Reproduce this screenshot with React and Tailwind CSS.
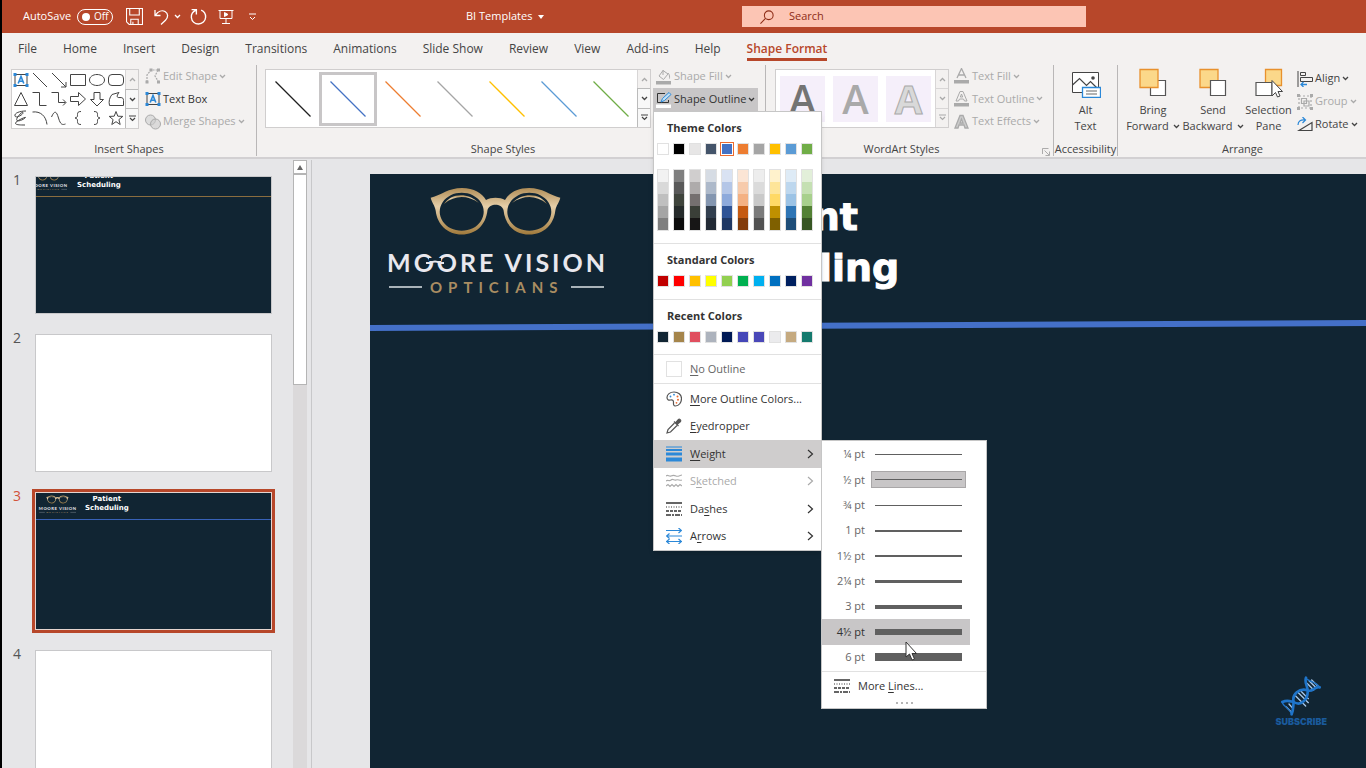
import React from 'react';
import clsx from 'clsx';

const tabs = ['File', 'Home', 'Insert', 'Design', 'Transitions', 'Animations', 'Slide Show', 'Review', 'View', 'Add-ins', 'Help', 'Shape Format'];

const themeColors = ['#ffffff', '#000000', '#e7e6e6', '#44546a', '#4472c4', '#ed7d31', '#a5a5a5', '#ffc000', '#5b9bd5', '#70ad47'];
const standardColors = ['#c00000', '#ff0000', '#ffc000', '#ffff00', '#92d050', '#00b050', '#00b0f0', '#0070c0', '#002060', '#7030a0'];
const recentColors = ['#112533', '#a5854b', '#e04f5f', '#adb3bd', '#001a55', '#4547b8', '#4a48b8', '#ebebed', '#c5aa80', '#157a6e'];

// Five tints and shades under every theme colour
const shades = [
  ['#f2f2f2', '#d9d9d9', '#bfbfbf', '#a5a5a5', '#7f7f7f'],
  ['#7f7f7f', '#595959', '#3f443c', '#262b2b', '#0c0c0c'],
  ['#d0cece', '#aeabab', '#757070', '#3a3f38', '#171616'],
  ['#d6dce4', '#adb9ca', '#8496b0', '#323f4f', '#222a35'],
  ['#d9e2f3', '#b4c6e7', '#8eaadb', '#2f5496', '#1f3864'],
  ['#fbe5d5', '#f7cbac', '#f4b183', '#c55a11', '#833c0b'],
  ['#ededed', '#dbdbdb', '#c9c9c9', '#7b7b7b', '#525252'],
  ['#fff2cc', '#fee599', '#ffd965', '#bf9000', '#7f6000'],
  ['#deebf6', '#bdd7ee', '#9cc3e5', '#2e75b5', '#1e4e79'],
  ['#e2efd9', '#c5e0b3', '#a8d08d', '#538135', '#375623'],
];

const styleLines = ['#1f1f1f', '#4472c4', '#ed7d31', '#a5a5a5', '#ffc000', '#5b9bd5', '#70ad47'];

const weights = [
  { label: '¼ pt', bar: 'h-px' },
  { label: '½ pt', bar: 'h-px', selected: true },
  { label: '¾ pt', bar: 'h-px' },
  { label: '1 pt', bar: 'h-[2px]' },
  { label: '1½ pt', bar: 'h-[2px]' },
  { label: '2¼ pt', bar: 'h-[3px]' },
  { label: '3 pt', bar: 'h-[4px]' },
  { label: '4½ pt', bar: 'h-[6px]', hover: true },
  { label: '6 pt', bar: 'h-[8px]' },
];

const Svg = ({ size = 16, className, children, ...rest }) => (
  <svg
    width={size}
    height={size}
    viewBox="0 0 16 16"
    fill="none"
    stroke="currentColor"
    className={clsx('shrink-0', className)}
    aria-hidden="true"
    {...rest}
  >
    {children}
  </svg>
);

const Chevron = ({ className }) => (
  <svg width="7" height="5" viewBox="0 0 7 5" fill="none" stroke="currentColor" strokeWidth="1.3" className={clsx('shrink-0', className)} aria-hidden="true">
    <path d="M1 1l2.5 2.5L6 1" />
  </svg>
);

const TextBoxIcon = () => (
  <Svg className="text-[#444]">
    <path d="M2 2.5h12v11H2z" />
    <path d="M0.5 1h3v3h-3zM12.5 1h3v3h-3zM0.5 12h3v3h-3zM12.5 12h3v3h-3z" fill="#2b88d8" stroke="none" />
    <path d="M5.2 11.5L8 4.5l2.8 7M6.2 9.2h3.6" stroke="#2b88d8" strokeWidth="1.6" />
  </Svg>
);

// ---- Title bar ----

const TitleBar = () => (
  <header className="flex h-[33px] shrink-0 items-center bg-[#b7472a] text-[12px] text-white">
    <div className="flex w-[464px] shrink-0 items-center pl-[21px]">
      <label htmlFor="autosave" className="w-[54px] text-[11px]">AutoSave</label>
      <span className="flex h-4 w-9 items-center gap-1 rounded-full border border-white pl-1 text-[10px]">
        <input id="autosave" type="checkbox" role="switch" className="h-2 w-2 shrink-0 appearance-none rounded-full bg-white" />
        Off
      </span>
      <button aria-label="Save" className="ml-[13px]">
        <Svg size={17} strokeWidth="1">
          <path d="M0.5 0.5h15v15H3l-2.500-2.500zM3.500 0.500v6h9v-6M4.500 15.500v-5h7v5M6.500 15v-2" />
        </Svg>
      </button>
      <button aria-label="Undo" className="ml-[11px]">
        <Svg size={16} strokeWidth="1.300">
          <path d="M1 1v5.500h5.500M1.300 6.300C4 2.500 8 0.800 11 2.500c3.500 2 3.300 6 .5 8.700L7 15.500" />
        </Svg>
      </button>
      <button aria-label="Undo list" className="ml-1"><Chevron /></button>
      <button aria-label="Redo" className="ml-[9px]">
        <Svg size={17} strokeWidth="1.300">
          <path d="M1.500 1.500h4.500v4.500M5.800 2C2.500 3.300 1 6 1.300 9c.4 3.500 3.200 6 6.700 6s6.500-2.800 6.700-6.300c.1-3-1.500-5.600-4.200-6.700" />
        </Svg>
      </button>
      <button aria-label="Start from beginning" className="ml-[11px]">
        <Svg size={16} strokeWidth="1">
          <path d="M0.500 1.500h15M2 1.500v8h12v-8M8 9.500v5M4 14.500h8" />
          <path d="M6.500 3.500v4l3.500-2z" fill="currentColor" />
        </Svg>
      </button>
      <button aria-label="Customize toolbar" className="ml-[14px]">
        <svg width="9" height="8" viewBox="0 0 9 8" fill="none" stroke="currentColor" aria-hidden="true">
          <path d="M1 1h7M2 4l2.500 2.500L7 4" />
        </svg>
      </button>
    </div>
    <div className="flex w-[276px] shrink-0 items-center gap-[6px] text-[11px]">
      BI Templates
      <svg width="6" height="4" viewBox="0 0 6 4" fill="currentColor" aria-hidden="true"><path d="M0 0h6L3 4z" /></svg>
    </div>
    <div className="flex h-[21px] w-full max-w-[344px] items-center gap-[15px] bg-[#fcc5b4] pl-[18px] text-[#8e2c16]">
      <Svg size={14} strokeWidth="1.200">
        <circle cx="10" cy="6" r="5" />
        <path d="M6.300 9.700L0.500 15.500" />
      </Svg>
      <input type="text" placeholder="Search" aria-label="Search" className="w-full bg-transparent text-[11px] outline-none placeholder:text-[#8e2c16]" />
    </div>
  </header>
);

const TabRow = () => (
  <nav className="flex h-8 shrink-0 items-center gap-[26px] pl-4 text-[12px] text-[#444]">
    {tabs.map((tab) => (
      <button
        key={tab}
        className={clsx(
          'h-6 shrink-0 border-b-[3px] pt-[3px] leading-4 whitespace-nowrap',
          tab === 'Shape Format' ? 'border-[#b7472a] font-semibold text-[#b7472a]' : 'border-transparent'
        )}
      >
        {tab}
      </button>
    ))}
  </nav>
);

// ---- Ribbon ----

const Group = ({ label, className, children, launcher }) => (
  <section className={clsx('relative flex h-[91px] shrink-0 flex-col border-r border-[#b9b7b7]', className)}>
    <div className="flex h-[76px] shrink-0 items-start">{children}</div>
    <h2 className={clsx('text-center text-[11px] leading-4 whitespace-nowrap text-[#444]', launcher && 'pr-4')}>{label}</h2>
    {launcher && (
      <button aria-label={label + ' options'} className="absolute right-[3px] bottom-0 text-[#999]">
        <Svg size={8} strokeWidth="1.600"><path d="M1 12V1h12M5 5l9 9M15 7v8H7" /></Svg>
      </button>
    )}
  </section>
);

const GalleryScroll = ({ muted }) => (
  <div className="flex w-[13px] shrink-0 flex-col text-[#444]">
    <button aria-label="Scroll up" className="grid flex-1 place-items-center border-l border-[#d8d6d6] bg-[#f3f1f0] text-[#aaa]">
      <Chevron className="rotate-180" />
    </button>
    <button aria-label="Scroll down" className={clsx('grid flex-1 place-items-center border border-r-0', muted ? 'border-[#d8d6d6] bg-[#f3f1f0] text-[#aaa]' : 'border-[#bbb] bg-[#f8f8f8]')}>
      <Chevron />
    </button>
    <button aria-label="More" className={clsx('grid flex-1 place-items-center border-l', muted ? 'border-[#d8d6d6] bg-[#f3f1f0] text-[#aaa]' : 'border-[#bbb] bg-[#f8f8f8]')}>
      <svg width="7" height="7" viewBox="0 0 7 7" fill="none" stroke="currentColor" strokeWidth="1.200" aria-hidden="true">
        <path d="M0 1h7M1 3l2.500 2.500L6 3" />
      </svg>
    </button>
  </div>
);

const shapePaths = [
  'M1 1l14 14',
  'M1 1l14 14M15 10v5h-5',
  'M0.500 2.500h15v11h-15z',
  'M8 2.500c4.200 0 7.500 2.400 7.500 5.500s-3.300 5.500-7.500 5.500S0.500 11.100 0.500 8 3.800 2.500 8 2.500z',
  'M4 2.500h8q3.500 0 3.500 3.500v4q0 3.500-3.500 3.500H4Q0.500 13.500 0.500 10V6Q0.500 2.500 4 2.500z',
  'M8 1.500l6.500 13h-13z',
  'M0.500 1.500h7v13h7',
  'M0.500 1.500h7v10h7M12 8.500l3 3-3 3',
  'M0.500 5.500h8v-4l7 6.500-7 6.500v-4h-8z',
  'M5 1.500h6v7h3.500L8 15 1.500 8.500H5z',
  'M4 3.500L11 1.500c-3 4-2 5.500 1 5 3 0 3.500 1 3.500 3v5H1.500c-1-4 0-8 2.500-11z',
  'M13 1C7 1 1 3 2 6s9-2 8-3.500S2 9 4 10.500s8-2 8.500-3S3 11 2.500 13s5 2 9.500 2',
  'M0.500 2c8-1 13.500 4 14.500 12.500',
  'M0.500 7c3-7 5-6 7 1s4 7 7 6',
  'M11 1.500c-3 0-3.500 1-3.500 3s0 3-2.500 3.500c2.500.5 2.500 1.500 2.500 3.500s.5 3 3.500 3',
  'M5 1.500c3 0 3.500 1 3.500 3s0 3 2.500 3.500c-2.500.5-2.500 1.500-2.500 3.500s-.5 3-3.500 3',
  'M8 1.500l1.800 4.700 5 .2-3.900 3.200 1.300 4.900L8 11.700l-4.200 2.800 1.300-4.900L1.200 6.400l5-.2z',
];

const InsertShapes = () => (
  <Group label="Insert Shapes" className="w-[255px]">
    <div className="mt-1 ml-[9px] flex h-[60px] w-[128px] border border-[#d0cece] bg-white text-[#444]">
      <div className="grid flex-1 grid-cols-6 place-items-center">
        <TextBoxIcon />
        {shapePaths.map((d) => (
          <Svg key={d}><path d={d} /></Svg>
        ))}
      </div>
      <GalleryScroll />
    </div>
    <div className="ml-[6px] grid h-[68px] grid-rows-3 text-[11px] whitespace-nowrap text-[#aaa]">
      <button className="flex items-center gap-[2px]">
        <Svg strokeWidth="1.200">
          <path d="M2 14V7l4-5h7M13 2l-3 6 3 5" strokeDasharray="2 1" />
          <path d="M0.500 12.500h3v3h-3zM4.500 0.500h3v3h-3zM12 0.500h3v3h-3zM12 12.500h3v3h-3z" fill="currentColor" stroke="none" />
        </Svg>
        Edit Shape <Chevron />
      </button>
      <button className="flex items-center gap-[2px] text-[#333]"><TextBoxIcon /> Text Box</button>
      <button className="flex items-center gap-[2px]">
        <Svg>
          <circle cx="5.500" cy="6" r="5" fill="#ddd" />
          <circle cx="10.500" cy="10" r="5" fill="#ccc" fillOpacity="0.600" />
        </Svg>
        Merge Shapes <Chevron />
      </button>
    </div>
  </Group>
);

const Swatches = ({ colors, selected }) => (
  <div className="flex gap-1 pl-[3px]">
    {colors.map((c, i) => (
      <button
        key={c}
        aria-label={c}
        style={{ backgroundColor: c }}
        className={clsx('h-3 w-3 border', i === selected ? 'border-[#fff] outline outline-[#ed6b2f]' : 'border-[#e1e1e1]')}
      />
    ))}
  </div>
);

const MenuTitle = ({ children }) => (
  <h3 className="h-[31px] pl-[13px] text-[11px] leading-[31px] font-bold text-[#333]">{children}</h3>
);

// Splits the label round its access key, which is underlined
const MenuLabel = ({ text, keyAt = 0 }) => (
  <span>
    {text.slice(0, keyAt)}
    <u className="underline-offset-2">{text[keyAt]}</u>
    {text.slice(keyAt + 1)}
  </span>
);

const MenuItem = ({ icon, text, keyAt, arrow, color = 'text-[#333]', active }) => (
  <button
    className={clsx(
      'flex h-full w-full items-center gap-2 pl-3 text-[11px] whitespace-nowrap',
      active && 'bg-[#cfcdcd]',
      color
    )}
  >
    {icon}
    <MenuLabel text={text} keyAt={keyAt} />
    {arrow && (
      <svg width="7" height="10" viewBox="0 0 7 10" fill="none" stroke="currentColor" strokeWidth="1.200" className="mr-[7px] ml-auto" aria-hidden="true">
        <path d="M1 1l4.500 4L1 9" />
      </svg>
    )}
  </button>
);

const DashesIcon = () => (
  <Svg>
    <path d="M0 2h16" strokeWidth="1.500" />
    <path d="M0 6h16" strokeDasharray="1 1.500" />
    <path d="M0 10h16" strokeWidth="1.500" strokeDasharray="3 1" />
    <path d="M0 14h16" strokeWidth="1.500" strokeDasharray="5 1 2 1" />
  </Svg>
);

const WeightMenu = () => (
  <div className="absolute top-0 left-full w-[166px] border border-[#c6c6c6] bg-white pt-px text-[11px]">
    <div className="grid h-[228px] grid-rows-9">
      {weights.map((w) => (
        <button
          key={w.label}
          className={clsx('mr-4 flex items-center gap-[6px]', w.hover ? 'bg-[#c8c6c7] text-[#333]' : 'text-[#666]')}
        >
          <span className="w-[43px] text-right">{w.label}</span>
          <span className={clsx('flex h-[17px] w-[95px] items-center border px-[3px]', w.selected ? 'border-[#a9a7a8] bg-[#c8c6c7]' : 'border-transparent')}>
            <span className={clsx('w-full bg-[#606060]', w.bar)} />
          </span>
        </button>
      ))}
    </div>
    <div className="mt-px border-t border-[#e1e1e1]">
      <div className="h-7"><MenuItem icon={<DashesIcon />} text="More Lines..." keyAt={5} /></div>
      <div className="flex h-2 justify-center gap-[3px] pt-[2px]">
        <i className="h-[2px] w-[2px] bg-[#b5b5b5]" />
        <i className="h-[2px] w-[2px] bg-[#b5b5b5]" />
        <i className="h-[2px] w-[2px] bg-[#b5b5b5]" />
        <i className="h-[2px] w-[2px] bg-[#b5b5b5]" />
      </div>
    </div>
    {/* Mouse pointer */}
    <svg width="13" height="20" viewBox="0 0 13 20" className="absolute top-[200px] left-[83px]" aria-hidden="true">
      <path d="M1 1v15l3.500-3 2.500 6 2.500-1-2.500-5.500h4.500z" fill="#fff" stroke="#333" />
    </svg>
  </div>
);

const OutlineMenu = () => (
  <div className="absolute top-full left-0 z-10 w-[169px] border border-[#c6c6c6] bg-white shadow-md">
    <MenuTitle>Theme Colors</MenuTitle>
    <Swatches colors={themeColors} selected={4} />
    <div className="mt-[14px] flex gap-1 pl-[3px]">
      {shades.map((column, i) => (
        <div key={i} className="grid h-[62px] w-3 grid-rows-5 border border-[#e1e1e1]">
          {column.map((c) => (
            <button key={c} aria-label={c} style={{ backgroundColor: c }} />
          ))}
        </div>
      ))}
    </div>
    <div className="mt-3 border-t border-[#e1e1e1]">
      <MenuTitle>Standard Colors</MenuTitle>
      <Swatches colors={standardColors} />
    </div>
    <div className="mt-3 border-t border-[#e1e1e1]">
      <MenuTitle>Recent Colors</MenuTitle>
      <Swatches colors={recentColors} />
    </div>
    <div className="mt-[11px] h-[30px] border-y border-[#e1e1e1]">
      <MenuItem color="text-[#666]" icon={<span className="h-4 w-4 border border-[#e1e1e1]" />} text="No Outline" />
    </div>
    <div className="mt-px grid h-[165px] grid-rows-6">
      <MenuItem
        icon={
          <Svg className="text-[#555]" strokeWidth="1.200">
            <path d="M8 1C4 1 1 3.500 1 6.500c0 2 1.500 3 3.500 2.500s3 .5 3 2-.5 4 2 4c3.500 0 6-3.500 6-7.500S12 1 8 1z" />
            <circle cx="4.500" cy="5.500" r="0.900" fill="#2b88d8" stroke="none" />
            <circle cx="8" cy="3.700" r="0.900" fill="#2b88d8" stroke="none" />
            <circle cx="11.500" cy="5.500" r="1" fill="#ed6b2f" stroke="none" />
            <circle cx="12" cy="8.800" r="1" fill="#ed6b2f" stroke="none" />
            <circle cx="10.500" cy="11.800" r="0.900" fill="#ed6b2f" stroke="none" />
          </Svg>
        }
        text="More Outline Colors..."
      />
      <MenuItem
        icon={
          <Svg className="text-[#555]" strokeWidth="1.200">
            <path d="M8.500 5l-6.500 6.500-1 3.500 3.500-1 6.500-6.500" />
            <path d="M8 3.500l4.500 4.500M9.500 5l3-3.500c1-1 2.800.8 2 2L11 6.500z" fill="currentColor" />
          </Svg>
        }
        text="Eyedropper"
      />
      <div className="relative">
        <MenuItem
          active
          arrow
          icon={
            <Svg className="text-[#2b88d8]">
              <path d="M0 1h16" />
              <path d="M0 4h16" strokeWidth="2" />
              <path d="M0 8h16" strokeWidth="3" />
              <path d="M0 13.500h16" strokeWidth="4" />
            </Svg>
          }
          text="Weight"
        />
        <WeightMenu />
      </div>
      <MenuItem
        color="text-[#aaa]"
        arrow
        icon={
          <Svg strokeWidth="1.100">
            <path d="M0 3c2-2 3 1 5 0s3-1 5 0 4-1 6-1M0 8c2-2 3 1 5-1s3 1 5 0 4 1 6 0M0 13l2-1.500 2 2 2-2 2 2 2-2 2 2 2-2 2 1.500" />
          </Svg>
        }
        text="Sketched"
        keyAt={1}
      />
      <MenuItem arrow icon={<DashesIcon />} text="Dashes" keyAt={2} />
      <MenuItem
        arrow
        icon={
          <Svg className="text-[#2b88d8]" strokeWidth="1.200">
            <path d="M0 2.500h15M12.500 0l3 2.500-3 2.500M1 8h15M3.500 5.500L0.500 8l3 2.500M0 13.500h16M3.500 11l-3 2.500 3 2.500M12.500 11l3 2.500-3 2.500" />
          </Svg>
        }
        text="Arrows"
        keyAt={1}
      />
    </div>
  </div>
);

const ShapeStyles = () => (
  <Group label="Shape Styles" launcher className="w-[509px]">
    <div className="mt-1 ml-2 flex h-[59px] w-[386px] border border-[#d0cece] bg-white">
      <div className="flex flex-1 items-center pl-px">
        {styleLines.map((c, i) => (
          <button
            key={c}
            aria-label={'Line style ' + (i + 1)}
            className={clsx('grid h-[54px] flex-1 place-items-center', i === 1 && 'border-[3px] border-[#c8c6c7]')}
          >
            <svg width="36" height="36" viewBox="0 0 36 36" aria-hidden="true">
              <path d="M0.500 0.500l35 35" stroke={c} strokeWidth="1.300" />
            </svg>
          </button>
        ))}
      </div>
      <GalleryScroll />
    </div>
    <div className="ml-[2px] flex flex-col text-[11px] whitespace-nowrap">
      <button className="flex h-[23px] items-center gap-[2px] px-[3px] text-[#aaa]">
        <Svg>
          <path d="M7 1.500L3 7l4.500 3.500L12 5zM7 1v5M12 4c2 2 1.500 4 1.500 5.500" />
          <path d="M0 12h15v3.500H0z" fill="currentColor" stroke="none" />
        </Svg>
        Shape Fill <Chevron />
      </button>
      <div className="relative">
        <button className="flex h-[23px] w-[105px] items-center gap-[2px] bg-[#c8c6c7] px-[3px] text-[#333]" aria-expanded="true">
          <Svg>
            <path d="M9 1.500H1.500v9h11V8" />
            <path d="M5 10l1.500-3.500L13 0.500l2 2-6.500 6z" fill="#bfe0f7" stroke="#2b88d8" />
            <path d="M0 12.500h15V16H0z" fill="#fff" stroke="none" />
          </Svg>
          Shape Outline <Chevron />
        </button>
        <OutlineMenu />
      </div>
    </div>
  </Group>
);

const WordArtStyles = () => (
  <Group label="WordArt Styles" launcher className="w-[288px]">
    <div className="mt-1 ml-[9px] flex h-[59px] w-[174px] border border-[#d0cece] bg-white">
      <div className="flex flex-1 items-center gap-2 pl-1 text-[40px] leading-[46px] font-semibold">
        <button className="h-[46px] w-[45px] bg-[#f5effa] text-[#747474]">A</button>
        <button className="h-[46px] w-[45px] bg-[#f5effa] text-[#a9a9a9]">A</button>
        <button className="h-[46px] w-[45px] bg-[#f5effa] font-bold text-[#d9d9d9] [-webkit-text-stroke:1px_#aaa]">A</button>
      </div>
      <GalleryScroll muted />
    </div>
    <div className="ml-[5px] grid h-[68px] grid-rows-3 text-[11px] whitespace-nowrap text-[#aaa]">
      <button className="flex items-center gap-[2px]">
        <Svg>
          <path d="M3 10L7.500 0.500 12 10M4.500 7h6" strokeWidth="1.300" />
          <path d="M0 12h15v3.500H0z" fill="currentColor" stroke="none" />
        </Svg>
        Text Fill <Chevron />
      </button>
      <button className="flex items-center gap-[2px]">
        <Svg>
          <path d="M2 10L6 0.500h3L13 10h-2.500L9.500 8h-4l-1 2zM7.500 3L6.300 6h2.400z" />
          <path d="M0 12h15v3.500H0z" fill="currentColor" stroke="none" />
        </Svg>
        Text Outline <Chevron />
      </button>
      <button className="flex items-center gap-[2px]">
        <Svg strokeWidth="1.300">
          <path d="M1 14L6 1.500h3L14 14h-3l-1-3H5l-1 3zM7.500 5L6 9h3z" fill="#ccc" />
        </Svg>
        Text Effects <Chevron />
      </button>
    </div>
  </Group>
);

const BigButton = ({ icon, lines, arrow, className }) => (
  <button className={clsx('flex flex-col items-center text-[11px] leading-4 text-[#444]', className)}>
    <svg width="30" height="30" viewBox="0 0 30 30" fill="none" className="mb-1" aria-hidden="true">{icon}</svg>
    <span>{lines[0]}</span>
    <span className="flex items-center gap-1 whitespace-nowrap">{lines[1]}{arrow && <Chevron />}</span>
  </button>
);

const AltText = () => (
  <Group label="Accessibility" className="w-16">
    <BigButton
      className="mx-auto mt-[3px]"
      lines={['Alt', 'Text']}
      icon={
        <>
          <path d="M1.500 4.500h26v20h-26z" fill="#fff" stroke="#444" />
          <path d="M1.500 17l7-6.500 7 7 4-4 6 6" stroke="#444" strokeWidth="1.200" />
          <circle cx="22" cy="10" r="1.800" fill="#444" />
          <path d="M11.500 19.500h18v10h-18z" fill="#fff" stroke="#2b88d8" strokeWidth="1.300" />
          <path d="M15 23h11M15 26h11" stroke="#666" />
        </>
      }
    />
  </Group>
);

const Arrange = () => (
  <Group label="Arrange" className="min-w-[249px] flex-1 border-r-0">
    <BigButton
      arrow
      className="mt-[3px] w-[66px] pl-1"
      lines={['Bring', 'Forward']}
      icon={
        <>
          <path d="M12.500 12.500h15v15h-15z" fill="#fff" stroke="#555" strokeWidth="1.200" />
          <path d="M2 1.500h18v18H2z" fill="#fbd88a" stroke="#e8912d" strokeWidth="1.300" />
        </>
      }
    />
    <BigButton
      arrow
      className="mt-[3px] w-[58px]"
      lines={['Send', 'Backward']}
      icon={
        <>
          <path d="M2 1.500h18v18H2z" fill="#fbd88a" stroke="#e8912d" strokeWidth="1.300" />
          <path d="M12.500 12.500h15v15h-15z" fill="#fff" stroke="#555" strokeWidth="1.200" />
        </>
      }
    />
    <BigButton
      className="mt-[3px] w-[53px]"
      lines={['Selection', 'Pane']}
      icon={
        <>
          <path d="M11.500 1.500h16v16h-16z" fill="#fbd88a" stroke="#e8912d" strokeWidth="1.300" />
          <path d="M2 14.500h16v13H2z" fill="#fff" stroke="#555" strokeWidth="1.200" />
          <path d="M18 12.500v15.500l3.500-3.500 2 4.500 2.500-1-2-4.500h4.500z" fill="#fff" stroke="#444" />
        </>
      }
    />
    <div className="ml-[2px] grid h-[71px] grid-rows-3 pt-[2px] text-[11px] whitespace-nowrap text-[#444]">
      <button className="flex items-center gap-[2px]">
        <Svg>
          <path d="M1 0v16M3.500 1.500h5v3h-5zM3.500 6.500h12v4h-12z" />
          <path d="M10 13.500H4M6.500 11L4 13.500 6.500 16" stroke="#2b88d8" strokeWidth="1.300" />
        </Svg>
        Align <Chevron />
      </button>
      <button className="flex items-center gap-[2px] text-[#aaa]">
        <Svg strokeWidth="1.200">
          <path d="M2 2h12v12H2z" strokeDasharray="2 2" />
          <path d="M4.500 4.500h5v5h-5zM7 7h5v5H7z" />
          <path d="M0 0h3v3H0zM13 0h3v3h-3zM0 13h3v3H0zM13 13h3v3h-3z" fill="currentColor" stroke="none" />
        </Svg>
        Group <Chevron />
      </button>
      <button className="flex items-center gap-[2px]">
        <Svg strokeWidth="1.200">
          <path d="M15 5.500v8H2z" />
          <path d="M1 8c0-4 3-5.500 7-5M5.500 0L8.500 3 5.500 6" stroke="#2b88d8" />
        </Svg>
        Rotate <Chevron />
      </button>
    </div>
  </Group>
);

// ---- Slides ----

const Logo = ({ className, id }) => (
  <svg viewBox="0 0 216 110" className={clsx('shrink-0 overflow-visible', className)} role="img" aria-label="Moore Vision Opticians">
    <defs>
      <linearGradient id={id} x1="0" y1="0" x2="0" y2="1">
        <stop offset="0" stopColor="#b08d57" />
        <stop offset="0.400" stopColor="#e6cfa9" />
        <stop offset="1" stopColor="#a07a3c" />
      </linearGradient>
    </defs>
    <path
      fill={`url(#${id})`}
      fillRule="evenodd"
      d="M42.700 11.700C54 9 60 2 74 2c12 0 20 5 24 12 5-3 14-3 19 0 4-7 12-12 24-12 14 0 20 7 31.300 9.700-1 5-4 7-5 13C166 38 156 48.500 141.300 48.500S117 39 115.500 24c-2-7-14-7-16 0C98 39 88 48.500 73.700 48.500S49 38 47.700 24.700c-1-6-4-8-5-13zM73.700 6.700a22 19 0 1 0 .01 0zM141.300 6.700a22 19 0 1 0 .01 0z"
    />
    <path d="M56 18c6-10 23-13 35-1-12-8-24-8-35 1zM124 17c12-12 29-9 35 1-11-9-23-9-35-1z" fill={`url(#${id})`} />
    <text x="-1" y="86" fontSize="25" fontWeight="700" fill="#e9e8ee" className="font-[Lato,sans-serif] tracking-[3px]">MOORE VISION</text>
    {/* Bridge that turns the two Os into a pair of glasses */}
    <path d="M41 73.500h12" stroke="#112533" strokeWidth="3" />
    <path d="M38 77h4q5-3 10 0h4" stroke="#e9e8ee" strokeWidth="2.200" fill="none" />
    <text x="42" y="107" fontSize="15" fontWeight="700" fill="#a98d62" className="font-[Lato,sans-serif] tracking-[6px]">OPTICIANS</text>
    <path d="M1 101h33M183 101h33" stroke="#a9b3b9" strokeWidth="2" />
  </svg>
);

const Thumb = ({ number, selected, children, dark }) => (
  <li className="flex items-start">
    <span className={clsx('-mt-1 w-[33px] shrink-0 pl-[11px] text-[14px] leading-4', selected ? 'text-[#d2523a]' : 'text-[#555]')}>{number}</span>
    <button
      aria-label={'Slide ' + number}
      className={clsx(
        'flex h-[138px] w-[237px] flex-col overflow-hidden border',
        dark ? 'bg-[#112533]' : 'bg-white',
        selected ? 'border-[#e5d5d0] outline-[3px] outline-[#b7472a]' : 'border-[#c8c8ca]'
      )}
    >
      {children}
    </button>
  </li>
);

const ThumbTitle = () => (
  <span className="text-center font-['DejaVu_Sans',sans-serif] text-[7px] leading-[9px] font-bold text-white">
    Patient<br />Scheduling
  </span>
);

const SlidePanel = () => (
  <aside className="flex w-[310px] shrink-0 border-r border-[#c8c8ca]">
    <ol className="flex w-[291px] flex-col gap-5 pt-4">
      <Thumb number={1} dark>
        <span className="-mt-[5px] -ml-[6px] flex items-start gap-[10px]">
          <Logo id="gold-1" className="h-[19px] w-[37px]" />
          <ThumbTitle />
        </span>
        <i className="mt-[5px] block h-px w-full bg-[#8a6d3f]" />
      </Thumb>
      <Thumb number={2} />
      <Thumb number={3} dark selected>
        <span className="flex items-start gap-[9px] pt-[2px] pl-[3px]">
          <Logo id="gold-3" className="h-[19px] w-[37px]" />
          <ThumbTitle />
        </span>
        <i className="mt-[5px] block h-px w-full bg-[#3862b8]" />
      </Thumb>
      <Thumb number={4} />
    </ol>
    {/* Scroll bar */}
    <div className="w-[14px] bg-[#dbd9da]">
      <div className="grid h-[14px] place-items-center border border-[#b5b5b5] bg-white">
        <svg width="6" height="5" viewBox="0 0 6 5" fill="#666" aria-hidden="true"><path d="M0 5h6L3 0z" /></svg>
      </div>
      <div className="h-[211px] border border-[#b5b5b5] bg-white" />
    </div>
  </aside>
);

const Slide = () => (
  <main className="flex flex-1 overflow-hidden pt-[14px] pl-[58px]">
    <article className="relative flex flex-1 items-start overflow-hidden bg-[#112533] pt-3 pl-[18px]">
      <Logo id="gold-main" className="h-[110px] w-[216px]" />
      <h1 className="ml-[58px] pt-[6px] text-center font-['DejaVu_Sans',sans-serif] text-[38px] leading-[51px] font-bold text-white [-webkit-text-stroke:1px_#fff]">
        Patient<br />Scheduling
      </h1>
      <svg viewBox="0 0 996 16" className="absolute inset-x-0 top-[143px] w-full" aria-hidden="true">
        <path d="M0 11L996 6" stroke="#4470c8" strokeWidth="6" />
      </svg>
      <div className="absolute right-[39px] bottom-[40px] flex flex-col items-center">
        <svg width="40" height="40" viewBox="0 0 120 120" fill="none" stroke="#1f74c9" strokeWidth="8" strokeLinecap="round" aria-hidden="true">
          <path d="M16 93l14 14M24 84l12 14M44 60l30 30M52 50l30 30M60 46l22 22M78 22l20 20M84 14l22 22M92 12l16 16" stroke="#a7c8ea" strokeWidth="4" />
          <path d="M4 78C20 70 28 76 38 78 60 92 82 70 80 43 78 25 70 20 75 5" />
          <path d="M32 115C38 100 36 90 38 78 32 55 55 35 80 43 95 50 100 30 116 34" />
          <path d="M4 78c0 14 20 14 28 37M75 5c2 12 30 10 41 29" strokeWidth="4" />
        </svg>
        <span className="font-[Inter,sans-serif] text-[9px] leading-[12px] font-black text-[#1a5a9c]">SUBSCRIBE</span>
      </div>
    </article>
  </main>
);

const App = () => (
  <div className="flex h-screen flex-col overflow-hidden border-l-2 border-black bg-[#e6e6e8] font-['Open_Sans',sans-serif]">
    <TitleBar />
    <div className="shrink-0 bg-[#f3f1f0]">
      <TabRow />
      <div className="flex h-[94px] border-b-2 border-[#d2d0d2]">
        <InsertShapes />
        <ShapeStyles />
        <WordArtStyles />
        <AltText />
        <Arrange />
      </div>
    </div>
    <div className="flex min-h-0 flex-1 pt-px">
      <SlidePanel />
      <Slide />
    </div>
  </div>
);

export default App;
